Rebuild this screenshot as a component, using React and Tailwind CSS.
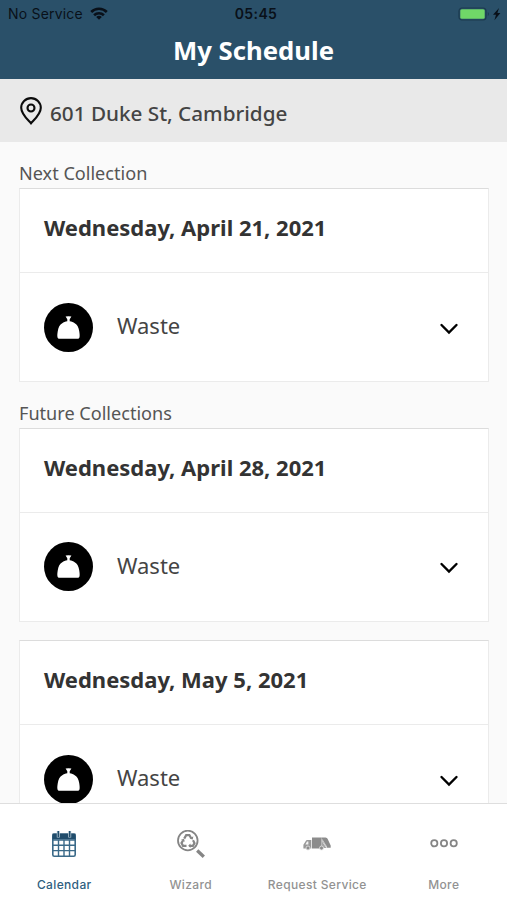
import React from 'react'

const sections = [
  { title: 'Next Collection', dates: ['Wednesday, April 21, 2021'] },
  { title: 'Future Collections', dates: ['Wednesday, April 28, 2021', 'Wednesday, May 5, 2021'] },
]

const tabs = [
  { label: 'Calendar', Icon: CalendarIcon, active: true },
  { label: 'Wizard', Icon: WizardIcon },
  { label: 'Request Service', Icon: TruckIcon },
  { label: 'More', Icon: MoreIcon },
]

function WifiIcon() {
  return (
    <svg className="ml-[7px] h-[13px] w-[18px]" viewBox="0 0 18 13" fill="none" stroke="#091019" strokeWidth="2.6">
      <path d="M1.200 5C5.500.700 12.500.700 16.800 5" />
      <path d="M4.100 8.300c2.800-2.700 7-2.700 9.800 0" />
      <path d="M9 12.700 6.200 9.900c1.600-1.400 4-1.400 5.600 0Z" fill="#091019" stroke="none" />
    </svg>
  )
}

function BatteryIcon() {
  return (
    <svg className="h-[14px] w-[44px]" viewBox="0 0 44 14">
      <rect x="1" y="1" width="27" height="12" rx="3" fill="none" stroke="#1c3a4e" strokeWidth="1.200" />
      <rect x="2.300" y="2.200" width="24.400" height="9.600" rx="1.500" fill="#70d768" />
      <path d="M29.800 5c1.500.6 1.500 3.400 0 4Z" fill="#1c3a4e" />
      <path d="M41 1 35 7.800h3l-1.600 5.400 6-7.200h-3Z" fill="#091019" />
    </svg>
  )
}

function PinIcon() {
  return (
    <svg className="h-[28px] w-[22px]" viewBox="0 0 22 28" fill="none" stroke="#0b0b0b" strokeWidth="2.100">
      <path d="M11 26.300C7.500 22.300 1.200 17 1.200 10.700a9.800 9.600 0 0 1 19.600 0C20.800 17 14.500 22.300 11 26.300Z" />
      <circle cx="11" cy="11" r="3.500" />
    </svg>
  )
}

function WasteIcon() {
  return (
    <svg className="size-[49px]" viewBox="0 0 49 49">
      <circle cx="24.500" cy="24.500" r="24.500" fill="#000" />
      <path
        d="M21.600 13.600q2.900-.9 5.800 0l-1.700 2.600v2c2 .2 3.700 1 5 2 2.600 1.200 3.900 4.200 4.500 7.800.4 2.300.6 4.300.4 5.800-.2 1.500-.8 2-2 2H15.400c-1.200 0-1.800-.5-2-2-.2-1.500 0-3.500.4-5.800.6-3.600 1.900-6.600 4.500-7.800 1.300-1 3-1.800 5-2v-2Z"
        fill="#fff"
      />
    </svg>
  )
}

function ChevronIcon() {
  return (
    <svg className="mt-[3px] h-[12px] w-[20px]" viewBox="0 0 20 12" fill="none" stroke="#000" strokeWidth="2.400" strokeLinecap="round">
      <path d="m2.500 2 7.500 7.500L17.500 2" />
    </svg>
  )
}

function CalendarIcon() {
  return (
    <svg className="size-[28px]" viewBox="0 0 28 28" fill="none" stroke="#3b6a89">
      <rect x="2.800" y="4.300" width="22.400" height="22" rx="1.500" strokeWidth="1.600" />
      <path d="M2.500 3.500h23v6H2.500Z" fill="#214d6c" stroke="none" />
      <path d="M3 10h22M3 15.300h22M3 20.600h22M8.500 10v16M14 10v16M19.500 10v16" strokeWidth="1.400" />
      <path d="M8.300 1v6.500M19.700 1v6.500" stroke="#b8cad6" strokeWidth="3" />
      <path d="M8.300 1v6M19.700 1v6" stroke="#214d6c" strokeWidth="1.500" />
    </svg>
  )
}

function WizardIcon() {
  return (
    <svg className="size-[28px]" viewBox="0 0 28 28" fill="none" stroke="#858585">
      <circle cx="10.800" cy="10.500" r="9.800" strokeWidth="1.800" />
      <path d="m20.200 20.500 6.600 6.200" strokeWidth="3.300" />
      <path d="m7.200 8.600 2-3.400h3.200l1.800 3M16 10.300l1.500 2.800-1.600 2.700h-3.500M9.500 15.800H6l-1.500-2.700 1.500-2.600" strokeWidth="2.200" />
      <path d="m12.600 8.800 3.200.7.500-3.200ZM13.500 13.500l-2.300 2.300 2.300 2.300ZM7.800 11.800 7 8.700l-3 1Z" fill="#858585" stroke="none" />
    </svg>
  )
}

function TruckIcon() {
  return (
    <svg className="size-[28px]" viewBox="0 0 28 28" fill="#8c8c8c">
      <path d="M9 7.500h9.500V18.500H9Z" />
      <path d="M18.500 7.500h4c1 0 1.800.7 2.300 1.800l2.900 6.200v2.200H24L18.500 10Z" />
      <path d="M18.500 10.500 23.500 18h-5Z" fill="#a5a5a5" />
      <path d="m18.900 9.200 5 8" stroke="#ddd" strokeWidth=".8" />
      <path d="M8.300 10H4.700c-1 0-1.700.4-2.200 1.400L.4 14.700v3.800h7.900Z" fill="#999" />
      <path d="m4 11.500-1.600 2.900h3v-2.900Z" fill="#f2f2f2" />
      <circle cx="5" cy="18" r="2" stroke="#e5e5e5" strokeWidth=".8" />
      <circle cx="18.500" cy="18" r="2" stroke="#e5e5e5" strokeWidth=".8" />
    </svg>
  )
}

function MoreIcon() {
  return (
    <svg className="size-[28px]" viewBox="0 0 28 28" fill="none" stroke="#858585" strokeWidth="1.800">
      <circle cx="4.300" cy="13.300" r="3.100" />
      <circle cx="14" cy="13.300" r="3.100" />
      <circle cx="23.700" cy="13.300" r="3.100" />
    </svg>
  )
}

function CollectionCard({ date }) {
  return (
    <div className="mb-[18.5px] h-[194px] border border-[#ebebeb] border-t-[#dcdcdc] bg-white">
      <div className="flex h-[84px] items-center border-b border-[#ebebeb] pb-[6px] pl-6 text-[22px] font-bold text-[#333]">
        {date}
      </div>
      <div className="flex h-[108px] items-center pl-6 pr-[29px]">
        <WasteIcon />
        <span className="ml-6 flex-1 pb-[3px] text-[22px] text-[#444]">Waste</span>
        <ChevronIcon />
      </div>
    </div>
  )
}

export default function App() {
  return (
    <div className="flex h-[900px] w-[507px] flex-col overflow-hidden bg-[#fafafa] font-['Noto_Sans',sans-serif]">
      <header className="h-[79px] shrink-0 bg-[#2a5069]">
        <div className="grid h-[27px] grid-cols-3 items-center pl-2 pr-[5px] font-['Inter',sans-serif] text-[14px] text-[#091019]">
          <div className="flex items-center whitespace-nowrap tracking-[0.2px]">
            No Service
            <WifiIcon />
          </div>
          <div className="pl-0.5 text-center font-semibold tracking-[0.4px]">05:45</div>
          <div className="flex justify-end">
            <BatteryIcon />
          </div>
        </div>
        <h1 className="text-center text-[25.7px] font-bold leading-[47px] text-white">My Schedule</h1>
      </header>

      <div className="flex h-[63px] shrink-0 items-center gap-2 bg-[#e9e9e9] pl-5 text-[#444]">
        <PinIcon />
        <span className="pt-[6px] text-[20.7px] font-medium">601 Duke St, Cambridge</span>
      </div>

      <main className="min-h-0 flex-1 overflow-hidden pl-[19px] pr-[18px] pt-[19px]">
        {sections.map((section) => (
          <section key={section.title}>
            <h2 className="h-[27px] text-[18.1px] leading-[25px] text-[#555]">{section.title}</h2>
            {section.dates.map((date) => (
              <CollectionCard key={date} date={date} />
            ))}
          </section>
        ))}
      </main>

      <nav className="grid h-[97px] shrink-0 grid-cols-4 border-t border-[#dedede] bg-white pl-px font-['Inter',sans-serif]">
        {tabs.map(({ label, Icon, active }) => (
          <div key={label} className={`flex flex-col items-center pt-[26px] ${active ? 'text-[#2f5f7f]' : 'text-[#929292]'}`}>
            <Icon />
            <span className="mt-[18px] whitespace-nowrap text-[12px] font-medium leading-[18px] tracking-[0.35px]">{label}</span>
          </div>
        ))}
      </nav>
    </div>
  )
}
